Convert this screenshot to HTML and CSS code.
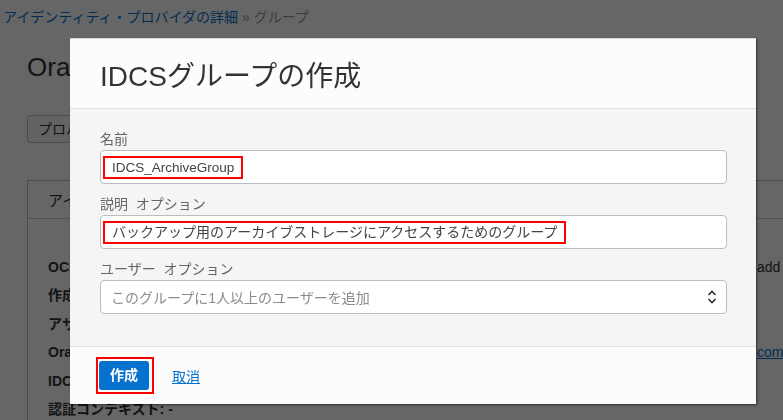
FILE: index.html
```html
<!DOCTYPE html>
<html>
  <head>
    <link rel="stylesheet" href="styles.css">
  </head>
  <body>
	<div class="crumbs"><a href="#">アイデンティティ・プロバイダの詳細</a> » グループ</div>
	<h1 class="pageTitle">Oracle Identity Cloud Service</h1>
	<div class="actions"><span class="btnPlain">プロバイダの編集</span></div>
	<div class="panel">
	  <div class="panelHead">アイデンティティ・プロバイダ情報</div>
	  <div class="infoRow"><b>OCID:</b><span>add</span></div>
	  <div class="infoRow"><b>作成済:</b><span></span></div>
	  <div class="infoRow"><b>アサーション属性:</b><span></span></div>
	  <div class="infoRow"><b>Oracle Identity Cloud Service URL:</b><a href="#">com/</a></div>
	  <div class="infoRow"><b>IDCSグループ:</b><span></span></div>
	  <div class="infoRow"><span class="plain">認証コンテキスト: -</span><span></span></div>
	</div>

	<div class="overlay"></div>

	<div class="modal">
	  <div class="modalHead">IDCSグループの作成</div>
	  <div class="modalBody">
		<div class="field">
		  <div class="fieldLabel">名前</div>
		  <div class="fieldInput"><span class="marked latin">IDCS_ArchiveGroup</span></div>
		</div>
		<div class="field">
		  <div class="fieldLabel">説明&nbsp; オプション</div>
		  <div class="fieldInput"><span class="marked">バックアップ用のアーカイブストレージにアクセスするためのグループ</span></div>
		</div>
		<div class="field">
		  <div class="fieldLabel">ユーザー&nbsp; オプション</div>
		  <div class="fieldInput select">
			<span class="placeholder">このグループに1人以上のユーザーを追加</span>
			<svg class="chevrons" width="10" height="14" viewBox="0 0 10 14">
			  <path d="M1.5 5 L5 1.5 L8.5 5" fill="none" stroke="#333" stroke-width="1.6"/>
			  <path d="M1.5 9 L5 12.5 L8.5 9" fill="none" stroke="#333" stroke-width="1.6"/>
			</svg>
		  </div>
		</div>
	  </div>
	  <div class="modalFoot">
		<span class="markBox"><span class="btnCreate">作成</span></span>
		<a class="cancelLink" href="#">取消</a>
	  </div>
	</div>
  </body>
</html>
```

FILE: styles.css
```css
	 body{
		margin: 0;
		width: 783px;
		height: 420px;
		overflow: hidden;
		background-color: #fff;
		color: #333;
		font-family: "Liberation Sans", "Noto Sans CJK JP", sans-serif;
		font-size: 14px;
	 }

	 a{
		color: #0572ce;
	 }

	 .crumbs{
		padding: 7px 3px 0;
		height: 20px;
		line-height: 20px;
		color: #999;
	 }

	 .crumbs a{
		text-decoration: none;
	 }

	 .pageTitle{
		margin: 25px 0 0 27px;
		font-size: 26px;
		font-weight: normal;
		line-height: 30px;
	 }

	 .actions{
		margin: 33px 0 0 27px;
	 }

	 .btnPlain{
		display: inline-block;
		height: 26px;
		line-height: 26px;
		padding: 0 10px;
		border: 1px solid #bbb;
		border-radius: 3px;
		background-color: #f7f7f7;
	 }

	 .panel{
		margin: 37px 0 0 27px;
		border-left: 1px solid #bbb;
		border-top: 1px solid #bbb;
		height: 300px;
	 }

	 .panelHead{
		padding: 8px 20px 0;
		height: 29px;
		font-size: 15px;
		border-bottom: 1px solid #ccc;
		margin-bottom: 38px;
	 }

	 .infoRow{
		display: grid;
		grid-template-columns: 709px 1fr;
		height: 28.4px;
		line-height: 20px;
		padding-left: 20px;
	 }

	 .infoRow .plain{
		font-weight: bold;
	 }

	 .overlay{
		position: fixed;
		top: 0;
		left: 0;
		right: 0;
		bottom: 0;
		background-color: rgba(0, 0, 0, 0.6);
	 }

	 .modal{
		position: absolute;
		left: 70px;
		top: 38px;
		width: 686px;
		background-color: #fcfcfc;
		border-top: 1px solid #d5d8dc;
		box-shadow: 1px 1px 2px rgba(0, 0, 0, 0.55);
	 }

	 .modalHead{
		height: 69px;
		display: flex;
		align-items: center;
		padding: 0 30px;
		font-size: 28px;
		color: #333;
		border-bottom: 1px solid #e1e1e1;
	 }

	 .modalBody{
		background-color: #f5f5f5;
		padding: 20px 29px 32px 30px;
	 }

	 .field + .field{
		margin-top: 10px;
	 }

	 .fieldLabel{
		height: 20px;
		line-height: 20px;
		margin-bottom: 1px;
		color: #666;
	 }

	 .fieldInput{
		height: 34px;
		box-sizing: border-box;
		border: 1px solid #b9bec6;
		border-radius: 4px;
		background-color: #fff;
		display: flex;
		align-items: center;
		padding-left: 2px;
		color: #444;
	 }

	 .marked{
		border: 2px solid #f00;
		padding: 1px 7px 1px 7px;
		line-height: 17px;
	 }

	 .latin{
		font-size: 13.5px;
	 }

	 .select{
		justify-content: space-between;
		padding: 0 9px 0 10px;
	 }

	 .placeholder{
		color: #8c8c8c;
	 }

	 .modalFoot{
		border-top: 1px solid #e3e3e3;
		height: 57px;
		padding: 0 26px;
		display: flex;
		align-items: center;
		gap: 18px;
	 }

	 .markBox{
		display: inline-flex;
		border: 2px solid #f00;
		padding: 2px 3px 2px 1px;
	 }

	 .btnCreate{
		display: inline-block;
		height: 29px;
		line-height: 29px;
		padding: 0 11px;
		border-radius: 3px;
		background-color: #0572ce;
		color: #fff;
		font-weight: bold;
	 }

	 .cancelLink{
		font-size: 14px;
	 }
```
